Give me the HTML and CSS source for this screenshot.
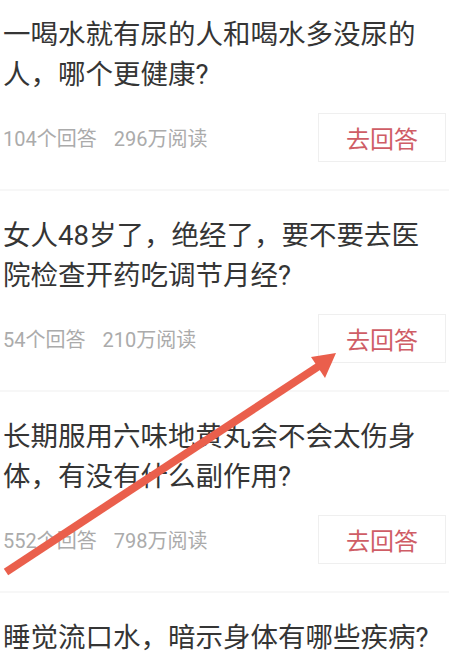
FILE: index.html
```html
<!DOCTYPE html>
<html lang="zh">
<head>
<meta charset="utf-8">
<link rel="stylesheet" href="styles.css">
</head>
<body>
<div class="page">
  <div class="list">
    <div class="item">
      <div class="title">一喝水就有尿的人和喝水多没尿的人，哪个更健康?</div>
      <div class="foot">
        <div class="meta"><span>104个回答</span><span>296万阅读</span></div>
        <div class="btn">去回答</div>
      </div>
    </div>
    <div class="item">
      <div class="title">女人48岁了，绝经了，要不要去医院检查开药吃调节月经?</div>
      <div class="foot">
        <div class="meta"><span>54个回答</span><span>210万阅读</span></div>
        <div class="btn">去回答</div>
      </div>
    </div>
    <div class="item">
      <div class="title">长期服用六味地黄丸会不会太伤身体，有没有什么副作用?</div>
      <div class="foot">
        <div class="meta"><span>552个回答</span><span>798万阅读</span></div>
        <div class="btn">去回答</div>
      </div>
    </div>
    <div class="item">
      <div class="title">睡觉流口水，暗示身体有哪些疾病?</div>
    </div>
  </div>
  <svg class="arrow" width="449" height="666" viewBox="0 0 449 666">
    <line x1="6" y1="572" x2="322" y2="364" stroke="#ea5f4c" stroke-width="8" stroke-linecap="butt"/>
    <polygon points="336,353 311,357 325,378" fill="#ea5f4c"/>
  </svg>
</div>
</body>
</html>
```
FILE: styles.css
```css
html, body {
  margin: 0;
  padding: 0;
  background: #ffffff;
}
.page {
  position: relative;
  width: 449px;
  height: 666px;
  overflow: hidden;
  font-family: Roboto, "Noto Sans CJK SC", sans-serif;
}
.list {
  margin-top: -10px;
}
.item {
  padding: 25px 3px 27px 3px;
  border-bottom: 2px solid #f7f7f7;
}
.title {
  font-size: 27.5px;
  line-height: 40px;
  color: #353535;
}
.foot {
  margin-top: 18px;
  display: flex;
  align-items: center;
  justify-content: space-between;
}
.meta {
  display: flex;
  gap: 17px;
  font-size: 20px;
  color: #ababab;
}
.btn {
  width: 126px;
  height: 47px;
  border: 1px solid #efefef;
  display: flex;
  align-items: center;
  justify-content: center;
  font-size: 24px;
  color: #cf5d66;
  box-sizing: content-box;
}
.arrow {
  position: absolute;
  left: 0;
  top: 0;
  pointer-events: none;
}
```
